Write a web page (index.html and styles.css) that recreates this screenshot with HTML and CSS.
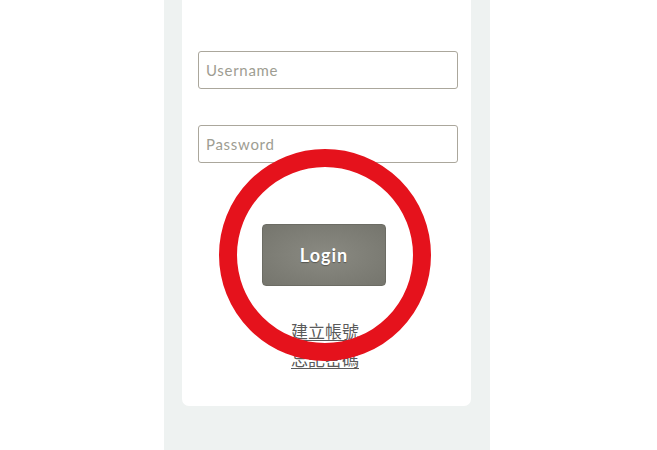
FILE: index.html
```html
<!DOCTYPE html>
<html>
<head>
<meta charset="utf-8">
<link rel="stylesheet" href="styles.css">
</head>
<body>
<div class="column">
  <div class="card">
    <div class="field"><span class="placeholder">Username</span></div>
    <div class="field field-second"><span class="placeholder">Password</span></div>
    <div class="button-row"><div class="login">Login</div></div>
    <div class="links">
      <a class="link">建立帳號</a>
      <a class="link">忘記密碼</a>
    </div>
  </div>
</div>
<svg class="ring" width="230" height="230" viewBox="0 0 230 230">
  <circle cx="115" cy="115" r="97" fill="none" stroke="#e5121c" stroke-width="18"/>
</svg>
</body>
</html>
```
FILE: styles.css
```css
html, body {
  margin: 0;
  padding: 0;
  background: #ffffff;
  width: 657px;
  height: 450px;
  overflow: hidden;
  font-family: Lato, "Noto Sans", sans-serif;
}
.column {
  margin-left: 164px;
  width: 326px;
  height: 450px;
  background: #eef2f1;
  padding: 0 19px 0 18px;
  box-sizing: border-box;
}
.card {
  background: #ffffff;
  border-radius: 0 0 7px 7px;
  padding: 51px 0 38px 16px;
  height: 406px;
  box-sizing: border-box;
}
.field {
  width: 260px;
  height: 38px;
  box-sizing: border-box;
  border: 1.5px solid #aba79c;
  border-radius: 3px;
  display: flex;
  align-items: center;
  padding-left: 7px;
}
.field-second {
  margin-top: 36px;
}
.placeholder {
  color: #9e9d92;
  font-size: 15px;
  letter-spacing: 0.7px;
  font-weight: 400;
}
.button-row {
  width: 260px;
  display: flex;
  justify-content: center;
  margin-top: 61px;
  padding-right: 8px;
  box-sizing: border-box;
}
.login {
  width: 124px;
  height: 62px;
  border-radius: 4px;
  background: radial-gradient(ellipse at center, #8a8a82 0%, #75756d 100%);
  border: 1px solid #6c6c64;
  box-sizing: border-box;
  display: flex;
  align-items: center;
  justify-content: center;
  color: #ffffff;
  font-size: 18px;
  font-weight: 700;
  letter-spacing: 1px;
  text-shadow: 0 1px 1px rgba(0,0,0,0.35);
}
.links {
  width: 260px;
  padding-right: 6px;
  box-sizing: border-box;
  margin-top: 33px;
  display: flex;
  flex-direction: column;
  align-items: center;
  gap: 5px;
}
.link {
  font-family: "Noto Sans CJK TC", sans-serif;
  color: #5a5a5a;
  font-size: 17px;
  line-height: 23px;
  text-decoration: underline;
  text-underline-offset: 2px;
}
.ring {
  position: absolute;
  left: 210px;
  top: 140px;
}
```
